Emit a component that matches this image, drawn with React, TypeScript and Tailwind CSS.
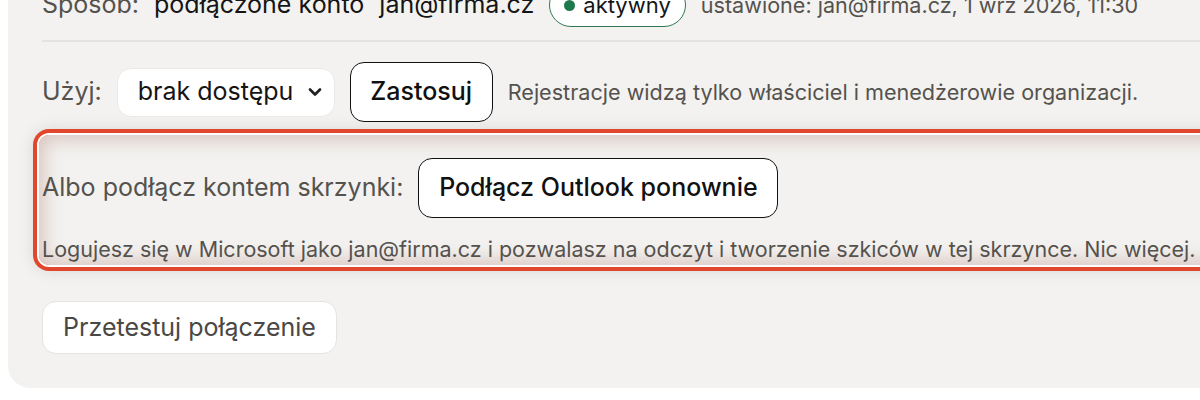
import { ChevronDown } from "lucide-react";

const MailboxSettings = () => {
  return (
    <div className="ml-[8px] -mt-[44px] w-[1300px] rounded-[22px] bg-[#f3f2f0] pl-[34px] pt-[30px] pb-[34px] font-['Inter',sans-serif]">
      <div className="flex h-[38px] items-center gap-[15px] text-[25px] whitespace-nowrap">
        <span className="text-[#55524e]">Sposób:</span>
        <span className="text-[#151515]">podłączone konto</span>
        <span className="text-[#151515]">jan@firma.cz</span>
        <span className="flex h-[44px] items-center gap-[8px] rounded-full border-[1.5px] border-[#2f7a52] bg-white px-[14px] text-[22px] text-[#151515]">
          <span className="h-[11px] w-[11px] rounded-full bg-[#1e7a4c]" />
          aktywny
        </span>
        <span className="text-[21.6px] text-[#55524e]">ustawione: jan@firma.cz, 1 wrz 2026, 11:30</span>
      </div>

      <div className="mt-[16px] border-t-2 border-[#e5e3e0]" />

      <div className="mt-[20px] flex h-[60px] items-center gap-[15px] whitespace-nowrap">
        <span className="text-[25px] text-[#55524e]">Użyj:</span>
        <div className="flex h-[49px] w-[218px] items-center justify-between rounded-[14px] border border-[#ebe9e6] bg-white pl-[20px] pr-[9px] text-[25px] text-[#151515]">
          brak dostępu
          <ChevronDown size={20} strokeWidth={3.2} className="text-[#222]" />
        </div>
        <button className="h-[60px] w-[143px] rounded-[14px] border-[1.5px] border-[#111] bg-white text-[25px] font-medium text-[#111]">
          Zastosuj
        </button>
        <span className="text-[21.6px] text-[#55524e]">
          Rejestracje widzą tylko właściciel i menedżerowie organizacji.
        </span>
      </div>

      <div className="mt-[13px] -ml-[3px] rounded-[10px] pl-[3px] pt-[23px] shadow-[0_0_0_2px_#fff,0_0_0_6px_#e1472c,0_0_16px_6px_rgba(0,0,0,0.10),inset_0_0_18px_5px_rgba(170,110,100,0.34)]">
        <div className="flex h-[60px] items-center gap-[15px] whitespace-nowrap">
          <span className="text-[25px] text-[#55524e]">Albo podłącz kontem skrzynki:</span>
          <button className="h-[60px] w-[360px] rounded-[14px] border-[1.5px] border-[#111] bg-white text-[25px] font-medium text-[#111]">
            Podłącz Outlook ponownie
          </button>
        </div>
        <p className="mt-[16px] h-[31px] whitespace-nowrap text-[21.5px] leading-[30px] text-[#55524e]">
          Logujesz się w Microsoft jako jan@firma.cz i pozwalasz na odczyt i tworzenie szkiców w tej skrzynce. Nic więcej.
        </p>
      </div>

      <button className="mt-[36px] h-[53px] w-[295px] rounded-[14px] border border-[#e6e4e1] bg-white text-[25px] text-[#4a4845]">
        Przetestuj połączenie
      </button>
    </div>
  );
};

export default function App() {
  return (
    <div className="h-[400px] w-[1200px] overflow-hidden bg-white">
      <MailboxSettings />
    </div>
  );
}
